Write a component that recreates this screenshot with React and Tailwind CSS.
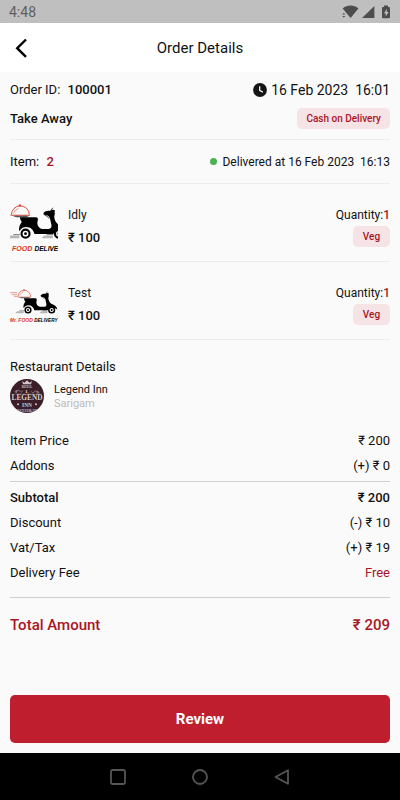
import React from "react";

const items = [
  { name: "Idly", price: 100, qty: 1, tag: "Veg", cropped: true },
  { name: "Test", price: 100, qty: 1, tag: "Veg" },
];

const charges = [
  { label: "Item Price", value: "₹ 200" },
  { label: "Addons", value: "(+) ₹ 0" },
];

const totals = [
  { label: "Subtotal", value: "₹ 200", bold: true },
  { label: "Discount", value: "(-) ₹ 10" },
  { label: "Vat/Tax", value: "(+) ₹ 19" },
  { label: "Delivery Fee", value: "Free", red: true },
];

function StatusBar() {
  return (
    <div className="flex h-[23px] items-center justify-between bg-[#bfbfbf] px-[9px] text-[#5f5f5f]">
      <span className="text-[14px] leading-5">4:48</span>
      <svg className="h-[14px] w-[50px]" viewBox="0 0 50 14" fill="#4d4d4d" aria-hidden="true">
        <path d="M1.6 3.4C6.4-.4 13 -.4 17.4 3.4L9.6 13 5.6 8.2 3.4 5.6z" />
        <path d="M1.2 9.6 2.8 8l1.6 1.6zM1.2 11l1.6 1.6L4.4 11z" />
        <path d="M33.4 1v12H21z" />
        <path fillRule="evenodd" d="M43 .6h4V2h1.1c.5 0 .9.4.9.9v9.4c0 .5-.4.9-.9.9h-6.2c-.5 0-.9-.4-.9-.9V2.900c0-.5.4-.9.9-.9H43zM45.800 3.800 43 8.400h1.800v3.200L47.600 7h-1.800z" />
      </svg>
    </div>
  );
}

function ScooterLogo({ cropped }) {
  return (
    <svg className="size-12 shrink-0" viewBox="30 40 144 102" preserveAspectRatio={cropped ? "xMidYMid slice" : "xMidYMid meet"} role="img" aria-label="Mr. Food Delivery">
      <g fill="none" stroke="#d9442f" strokeLinecap="round">
        <path d="M54 62a19 18 0 0 1 38 0" strokeWidth="2" />
        <path d="M59 59a14 12 0 0 1 9-9" strokeWidth="1.200" />
        <path d="M31 51h19M36 57h14M43 62h7" strokeWidth="1.500" />
      </g>
      <circle cx="72" cy="43" r="2.500" fill="#d9442f" />
      <path d="M50 63h45l-3 2H54z" fill="#d9442f" />
      <path d="M56 65h35l-4 3H64z" fill="#555" />
      <path d="M52 107h19v6H45zM124 107h18v6h-24z" fill="#b5b5b5" />
      <path d="M58 105h14M129 105h14" stroke="#777" strokeWidth="2" />
      <circle cx="84" cy="103" r="8.500" fill="#fff" stroke="#000" strokeWidth="4.500" />
      <circle cx="84" cy="103" r="3" />
      <circle cx="155" cy="103" r="8.500" fill="#fff" stroke="#000" strokeWidth="4.500" />
      <circle cx="155" cy="103" r="3" />
      <path d="M72 68h34c4 0 5 3 4 7l-1 5c0 7 4 12 10 13h14c5 0 7-4 6-9l-3-13c-1-5-6-8-13-8l-1-4c4-4 9-6 15-4l3-3 6 1v10l-1 3c0 8 4 14 9 18 10 3 17 8 18 18-6-5-15-7-21-4-5 3-7 6-10 6h-38c-2-9-8-15-18-15-6 0-11 3-14 9-2-6 0-14 5-20l-3-5z" />
      <path d="M136 56l6-8M124 63l6 3 4 5" fill="none" stroke="#000" strokeWidth="1.500" />
      <g fontFamily="Liberation Sans, sans-serif" fontWeight="700" fontStyle="italic">
        {!cropped && <text x="30" y="139" fontSize="14" fill="#d8321f">Mr.</text>}
        <text x="55" y="139" fontSize="15" fill="#d8321f">FOOD</text>
        <text x="103" y="139" fontSize="14">DELIVERY</text>
      </g>
    </svg>
  );
}

function RestaurantLogo() {
  return (
    <svg className="size-[34px] shrink-0 rounded-full" viewBox="0 0 102 102" role="img" aria-label="Legend Inn">
      <rect width="102" height="102" fill="#3b1e2a" />
      <path d="M36 6l7 5 8-7 8 7 7-5-3 10H39z" fill="#d3c6c4" />
      <g fill="#d8cbc8" fontFamily="Liberation Serif, serif" fontWeight="700" textAnchor="middle">
        <text x="51" y="26" fontSize="9">ROYAL</text>
        <text x="51" y="41" fontSize="14">L</text>
        <text x="51" y="64" fontSize="22">LEGEND</text>
        <text x="51" y="83" fontSize="16">INN</text>
        <text x="51" y="98" fontSize="11">RESTAURANT</text>
      </g>
      <g fill="none" stroke="#b9a5a5" strokeWidth="2">
        <path d="M14 39c5-7 9-4 7 0s-6 2-2-2 9-4 11 0 7 2 8-2" />
        <path d="M64 37c1 4 6 6 8 2s7-4 11 0 0 6-2 2 2-7 7 0" />
        <path d="M10 45h82" strokeWidth="1" />
      </g>
      <circle cx="24" cy="76" r="3" fill="#d8cbc8" />
      <circle cx="78" cy="76" r="3" fill="#d8cbc8" />
    </svg>
  );
}

function Tag({ children }) {
  return <span className="min-w-[37px] rounded-[5px] bg-[#f5e3e5] px-[9px] text-center text-[10px] leading-[21px] font-medium text-[#a91525]">{children}</span>;
}

function Row({ label, value, bold, red }) {
  return (
    <div className={"flex justify-between text-[13px] leading-[25px] " + (bold ? "font-medium" : "")}>
      <dt>{label}</dt>
      <dd className={red ? "text-[#a91525]" : ""}>{value}</dd>
    </div>
  );
}

export default function App() {
  return (
    <div className="flex min-h-screen flex-col bg-[#fafafa] font-[Roboto,sans-serif] text-[#111]">
      <StatusBar />
      <header className="grid h-[49px] grid-cols-[44px_1fr_44px] items-center bg-white">
        <button type="button" aria-label="Back" className="flex h-full items-center pl-[14px]">
          <svg className="h-5 w-[14px]" viewBox="0 0 14 20" fill="none" stroke="#000" strokeWidth="2.400" aria-hidden="true">
            <path d="M12 1.500 3.200 10.200 12 18.800" />
          </svg>
        </button>
        <h1 className="text-center text-[15px] leading-5">Order Details</h1>
      </header>

      <main className="flex-1 px-[10px] pt-2">
        <section className="border-b border-[#ececec] pb-[10px]">
          <div className="flex items-center justify-between leading-5">
            <p className="text-[13px]">Order ID: <span className="ml-1 font-medium">100001</span></p>
            <p className="flex items-center gap-1">
              <svg className="size-[14px]" viewBox="0 0 14 14" aria-hidden="true">
                <circle cx="7" cy="7" r="6.900" fill="#151515" />
                <path d="M6.700 3.200v4.100l3.200 2" fill="none" stroke="#fff" strokeWidth="1.200" />
              </svg>
              <span className="text-[14px] whitespace-pre">16 Feb 2023  16:01</span>
            </p>
          </div>
          <div className="mt-2 flex items-center justify-between">
            <p className="text-[13px] leading-5 font-medium">Take Away</p>
            <Tag>Cash on Delivery</Tag>
          </div>
        </section>

        <section className="flex h-11 items-center justify-between border-b border-[#ececec]">
          <p className="text-[13px]">Item: <span className="ml-1 font-medium text-[#a91525]">2</span></p>
          <p className="flex items-center gap-[5px] text-[12px]">
            <span className="size-[7px] rounded-full bg-[#4caf50]" />
            <span className="whitespace-pre">Delivered at 16 Feb 2023  16:13</span>
          </p>
        </section>

        <ul>
          {items.map((it) => (
            <li key={it.name} className="flex gap-[10px] border-b border-[#ececec] pt-5 pb-[9px]">
              <ScooterLogo cropped={it.cropped} />
              <div className="flex-1">
                <p className="text-[12px] leading-[22px]">{it.name}</p>
                <p className="mt-[2px] text-[13px] leading-5 font-medium">₹ {it.price}</p>
              </div>
              <div className="flex flex-col items-end">
                <p className="text-[12px] leading-[22px]">Quantity:<span className="font-medium text-[#a91525]">{it.qty}</span></p>
                <Tag>{it.tag}</Tag>
              </div>
            </li>
          ))}
        </ul>

        <section className="pt-[17px]">
          <h2 className="text-[13px] leading-5">Restaurant Details</h2>
          <div className="mt-[2px] flex gap-[10px]">
            <RestaurantLogo />
            <div className="pt-1">
              <p className="text-[11px] leading-[14px]">Legend Inn</p>
              <p className="text-[11px] leading-[14px] text-[#bcbcbc]">Sarigam</p>
            </div>
          </div>
        </section>

        <dl className="mt-[15px] border-b border-[#d0d0d0] pb-[3px]">
          {charges.map((c) => <Row key={c.label} {...c} />)}
        </dl>
        <dl className="border-b border-[#d0d0d0] pt-[3px] pb-3">
          {totals.map((t) => <Row key={t.label} {...t} />)}
        </dl>
        <p className="flex justify-between pt-[17px] text-[15px] leading-5 font-medium text-[#a91525]">
          <span>Total Amount</span>
          <span>₹ 209</span>
        </p>
      </main>

      <footer>
        <div className="px-[10px] pb-[10px]">
          <button type="button" className="h-12 w-full rounded-[5px] bg-[#be1e2d] text-[15px] font-bold text-white">Review</button>
        </div>
        <nav className="flex h-[47px] items-center justify-center gap-[66px] bg-black">
          <button type="button" aria-label="Recent apps">
            <svg className="size-4" viewBox="0 0 16 16" fill="none" stroke="#555" strokeWidth="1.800"><rect x="1" y="1" width="14" height="14" rx="1.500" /></svg>
          </button>
          <button type="button" aria-label="Home">
            <svg className="size-4" viewBox="0 0 16 16" fill="none" stroke="#555" strokeWidth="1.800"><circle cx="8" cy="8" r="7" /></svg>
          </button>
          <button type="button" aria-label="Back to previous">
            <svg className="size-4" viewBox="0 0 16 16" fill="none" stroke="#555" strokeWidth="1.800" strokeLinejoin="round"><path d="M14 1.200v13.600L1.500 8z" /></svg>
          </button>
        </nav>
      </footer>
    </div>
  );
}
